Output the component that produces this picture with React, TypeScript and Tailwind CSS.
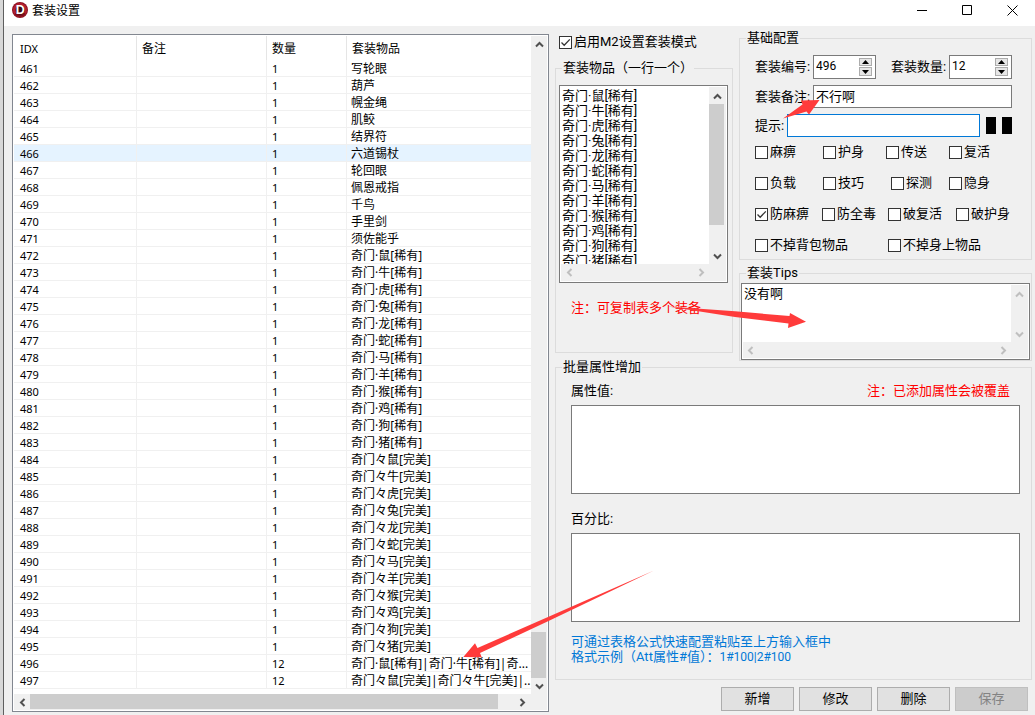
import React, { useId, useState } from 'react';

type Row = {
  idx: number;
  remark?: string;
  count: number;
  items: string;
};

type Option = {
  label: string;
  checked?: boolean;
};

type Direction = 'up' | 'down' | 'left' | 'right';

const ZODIAC = ['鼠', '牛', '虎', '兔', '龙', '蛇', '马', '羊', '猴', '鸡', '狗', '猪'];

const BASIC_ITEMS = [
  '写轮眼',
  '葫芦',
  '幌金绳',
  '肌鲛',
  '结界符',
  '六道锡杖',
  '轮回眼',
  '佩恩戒指',
  '千鸟',
  '手里剑',
  '须佐能乎',
];

const RARE_ITEMS = ZODIAC.map((name) => `奇门·${name}[稀有]`);
const PERFECT_ITEMS = ZODIAC.map((name) => `奇门々${name}[完美]`);

const rows: Row[] = [
  ...[...BASIC_ITEMS, ...RARE_ITEMS, ...PERFECT_ITEMS].map((items, i) => ({
    idx: 461 + i,
    count: 1,
    items,
  })),
  { idx: 496, count: 12, items: '奇门·鼠[稀有]|奇门·牛[稀有]|奇...' },
  { idx: 497, count: 12, items: '奇门々鼠[完美]|奇门々牛[完美]|..' },
];

const optionRows: { columns: string; options: Option[] }[] = [
  {
    columns: 'grid-cols-[68px_63px_63px_1fr]',
    options: [{ label: '麻痹' }, { label: '护身' }, { label: '传送' }, { label: '复活' }],
  },
  {
    columns: 'grid-cols-[68px_68px_58px_1fr]',
    options: [{ label: '负载' }, { label: '技巧' }, { label: '探测' }, { label: '隐身' }],
  },
  {
    columns: 'grid-cols-[67px_66px_68px_1fr]',
    options: [
      { label: '防麻痹', checked: true },
      { label: '防全毒' },
      { label: '破复活' },
      { label: '破护身' },
    ],
  },
  {
    columns: 'grid-cols-[133px_1fr]',
    options: [{ label: '不掉背包物品' }, { label: '不掉身上物品' }],
  },
];

const CHEVRONS: Record<Direction, string> = {
  up: 'M1 6.5 4.5 3 8 6.5',
  down: 'M1 2.5 4.5 6 8 2.5',
  left: 'M6.5 1 3 4.5 6.5 8',
  right: 'M2.5 1 6 4.5 2.5 8',
};

const ScrollArrow: React.FC<{ to: Direction; disabled?: boolean }> = ({ to, disabled }) => (
  <button
    type="button"
    disabled={disabled}
    aria-label={`scroll ${to}`}
    className="flex size-4 shrink-0 items-center justify-center text-[#505050] disabled:text-[#bfbfbf]"
  >
    <svg viewBox="0 0 9 9" className="size-[9px]" fill="none" stroke="currentColor" strokeWidth="2">
      <path d={CHEVRONS[to]} />
    </svg>
  </button>
);

const Check: React.FC<Option> = ({ label, checked }) => (
  <label className="flex h-4 items-center gap-0.5 whitespace-nowrap">
    <span className="grid shrink-0">
      <input
        type="checkbox"
        defaultChecked={checked}
        className="peer col-start-1 row-start-1 size-[13px] appearance-none border border-[#333] bg-white"
      />
      <svg
        viewBox="0 0 13 13"
        className="pointer-events-none invisible col-start-1 row-start-1 size-[13px] peer-checked:visible"
        fill="none"
        stroke="#333"
        strokeWidth="1.3"
      >
        <path d="M2.5 6.5 5.2 9.2 10.8 3.4" />
      </svg>
    </span>
    {label}
  </label>
);

const Group: React.FC<{ title: string; className?: string; children: React.ReactNode }> = ({
  title,
  className,
  children,
}) => (
  <fieldset className={`min-w-0 border border-[#dcdcdc] ${className ?? ''}`}>
    <legend className="ml-1.5 px-px leading-3">{title}</legend>
    {children}
  </fieldset>
);

const NumberField: React.FC<{ label: string; initial: number }> = ({ label, initial }) => {
  const id = useId();
  const [value, setValue] = useState(initial);

  return (
    <div className="flex items-center">
      <label htmlFor={id} className="w-[58px]">
        {label}:
      </label>
      <div className="flex h-6 w-[63px] border border-[#7a7a7a] bg-white p-0.5 pr-[3px]">
        <input
          id={id}
          value={value}
          onChange={(e) => setValue(Number(e.target.value) || 0)}
          className="h-4 min-w-0 flex-1 text-[12px] outline-none"
        />
        <div className="flex flex-col gap-px">
          <button
            type="button"
            aria-label={`${label} +`}
            onClick={() => setValue(value + 1)}
            className="flex h-2 w-[13px] items-center justify-center border border-[#acacac] bg-[#e6e6e6]"
          >
            <svg viewBox="0 0 7 4" className="h-1 w-[7px]">
              <path d="M3.5 0 7 4H0z" />
            </svg>
          </button>
          <button
            type="button"
            aria-label={`${label} -`}
            onClick={() => setValue(value - 1)}
            className="flex h-[9px] w-[13px] items-center justify-center border border-[#acacac] bg-[#e6e6e6]"
          >
            <svg viewBox="0 0 7 4" className="h-1 w-[7px]">
              <path d="M0 0h7L3.5 4z" />
            </svg>
          </button>
        </div>
      </div>
    </div>
  );
};

const TitleBar = () => (
  <header className="flex h-[26px] items-start bg-white pl-2">
    <svg viewBox="0 0 16 16" className="mt-0.5 size-4">
      <circle cx="8" cy="8" r="8" fill="#8d1220" />
      <circle cx="8" cy="8" r="7" fill="#b32032" />
      <path d="M2.5 12A6.8 6.8 0 0 0 13.6 11.8L8 8z" fill="#7c0f1c" />
      <circle cx="8.2" cy="8" r="4.6" fill="#3a0a10" />
      <text
        x="8.3"
        y="12.4"
        textAnchor="middle"
        fontSize="12.5"
        fontWeight="700"
        fontFamily="Liberation Sans, sans-serif"
        fill="#fff"
      >
        D
      </text>
    </svg>
    <h1 className="ml-1 flex-1 text-[12px] leading-[22px]">套装设置</h1>
    <button type="button" aria-label="最小化" className="flex h-5 w-[45px] items-center justify-center">
      <svg viewBox="0 0 11 11" className="size-[11px]" stroke="#000">
        <path d="M0 5.5h10" />
      </svg>
    </button>
    <button type="button" aria-label="最大化" className="flex h-5 w-[45px] items-center justify-center">
      <svg viewBox="0 0 11 11" className="size-[11px]" stroke="#000" fill="none">
        <path d="M.5.5h9v9h-9z" />
      </svg>
    </button>
    <button type="button" aria-label="关闭" className="flex h-5 w-[45px] items-center justify-center">
      <svg viewBox="0 0 11 11" className="size-[11px]" stroke="#000">
        <path d="M.5.5l10 10M10.5.5l-10 10" />
      </svg>
    </button>
  </header>
);

const SuitTable = () => {
  const [selected, setSelected] = useState(466);

  return (
    <section className="mt-0.5 flex min-w-0 flex-1 flex-col border border-[#828790] bg-white p-px font-['Noto_Sans','Noto_Sans_CJK_SC',sans-serif] text-[12px]">
      <div className="flex flex-1">
        <div className="min-w-0 flex-1 pb-1">
          <table className="w-full table-fixed border-separate border-spacing-0 text-left">
            <colgroup>
              <col className="w-[123px]" />
              <col className="w-[130px]" />
              <col className="w-[80px]" />
              <col />
            </colgroup>
            <thead>
              <tr>
                <th className="h-6 border-r border-[#e5e5e5] p-0 pt-0.5 pl-1.5 text-[11px] font-normal">IDX</th>
                <th className="border-r border-[#e5e5e5] p-0 pt-0.5 pl-[5px] font-normal">备注</th>
                <th className="border-r border-[#e5e5e5] p-0 pt-0.5 pl-[5px] font-normal">数量</th>
                <th className="p-0 pt-0.5 pl-[5px] font-normal">套装物品</th>
              </tr>
            </thead>
            <tbody>
              {rows.map((row) => (
                <tr
                  key={row.idx}
                  onClick={() => setSelected(row.idx)}
                  className={row.idx === selected ? 'bg-[#e5f3ff]' : ''}
                >
                  <td className="h-[17px] border-r border-b border-[#f0f0f0] p-0 pt-0.5 pl-1.5 text-[11px] leading-[14px]">
                    {row.idx}
                  </td>
                  <td className="border-r border-b border-[#f0f0f0] p-0 pt-0.5 pl-[5px] leading-[14px]">
                    {row.remark}
                  </td>
                  <td className="border-r border-b border-[#f0f0f0] p-0 pt-0.5 pl-[5px] text-[11px] leading-[14px]">
                    {row.count}
                  </td>
                  <td className="border-b border-[#f0f0f0] p-0 pt-0.5 pl-1 leading-[14px] whitespace-nowrap">
                    {row.items}
                  </td>
                </tr>
              ))}
            </tbody>
          </table>
        </div>
        <div className="flex w-4 flex-col bg-[#f0f0f0]">
          <ScrollArrow to="up" />
          <div className="flex-1" />
          <div className="mr-px h-[46px] bg-[#cdcdcd]" />
          <ScrollArrow to="down" />
        </div>
      </div>
      <div className="flex h-4 bg-[#f0f0f0] pr-[17px]">
        <ScrollArrow to="left" />
        <div className="mb-px flex-1 bg-[#cdcdcd]" />
        <div className="w-4" />
        <ScrollArrow to="right" />
      </div>
    </section>
  );
};

const SuitItems = () => (
  <div className="flex w-[178px] flex-col gap-3 pt-0.5 pb-2">
    <div className="pl-1">
      <Check label="启用M2设置套装模式" checked />
    </div>
    <Group title="套装物品（一行一个）" className="flex-1">
      <div className="mt-[11px] mr-1 ml-[3px] flex h-[198px] flex-col border border-[#7a7a7a] bg-[#f0f0f0] outline outline-1 -outline-offset-2 outline-white">
        <div className="flex flex-1">
          <textarea
            aria-label="套装物品"
            wrap="off"
            defaultValue={RARE_ITEMS.join('\n')}
            className="min-w-0 flex-1 resize-none overflow-hidden bg-white pt-0.5 pl-0.5 leading-[15px] outline-none"
          />
          <div className="flex w-[18px] flex-col pt-0.5 pr-0.5">
            <ScrollArrow to="up" />
            <div className="mr-px h-[121px] bg-[#cdcdcd]" />
            <div className="flex-1" />
            <ScrollArrow to="down" />
          </div>
        </div>
        <div className="flex h-[18px] justify-between pr-[18px] pl-px">
          <ScrollArrow to="left" disabled />
          <ScrollArrow to="right" disabled />
        </div>
      </div>
      <p className="mt-[17px] ml-[15px] leading-4 text-[#f00]">注：可复制表多个装备</p>
    </Group>
  </div>
);

const BasicConfig = () => (
  <Group title="基础配置">
    <div className="flex flex-col gap-1.5 pt-[11px] pr-[19px] pl-[15px]">
      <div className="flex justify-between">
        <NumberField label="套装编号" initial={496} />
        <NumberField label="套装数量" initial={12} />
      </div>
      <div className="flex items-center">
        <label htmlFor="remark" className="w-[58px]">
          套装备注:
        </label>
        <input
          id="remark"
          defaultValue="不行啊"
          className="h-[23px] min-w-0 flex-1 border border-[#7a7a7a] bg-white pb-0.5 pl-0.5 outline-none"
        />
      </div>
      <div className="flex items-center gap-1.5">
        <div className="flex flex-1 items-center">
          <label htmlFor="hint" className="w-8">
            提示:
          </label>
          <input
            id="hint"
            className="h-[23px] min-w-0 flex-1 border border-[#0078d7] bg-white px-0.5 outline-none"
          />
        </div>
        <button type="button" aria-label="文字颜色" className="h-[17px] w-2.5 bg-black" />
        <button type="button" aria-label="背景颜色" className="h-[17px] w-2.5 bg-black" />
      </div>
    </div>
    <div className="mt-[7px] flex flex-col gap-[15px] pb-1.5 pl-[15px]">
      {optionRows.map(({ columns, options }) => (
        <div key={options[0].label} className={`grid ${columns}`}>
          {options.map((option) => (
            <Check key={option.label} {...option} />
          ))}
        </div>
      ))}
    </div>
  </Group>
);

const SuitTips = () => (
  <Group title="套装Tips">
    <div className="mx-px mt-1 flex h-[77px] flex-col border border-[#7a7a7a] bg-[#f0f0f0] outline outline-1 -outline-offset-2 outline-white">
      <div className="flex flex-1">
        <textarea
          aria-label="套装Tips"
          defaultValue="没有啊"
          className="min-w-0 flex-1 resize-none overflow-hidden bg-white pt-0.5 pl-0.5 leading-[15px] outline-none"
        />
        <div className="flex w-[18px] flex-col justify-between pt-0.5 pr-0.5">
          <ScrollArrow to="up" disabled />
          <ScrollArrow to="down" disabled />
        </div>
      </div>
      <div className="flex h-[17px] justify-between pr-[18px]">
        <ScrollArrow to="left" disabled />
        <ScrollArrow to="right" disabled />
      </div>
    </div>
  </Group>
);

const BatchAttributes = () => (
  <Group title="批量属性增加">
    <div className="flex flex-col pt-2.5 pr-[11px] pb-3.5 pl-[15px]">
      <div className="flex justify-between pr-2.5 leading-4">
        <label htmlFor="values">属性值:</label>
        <p className="text-[#f00]">注：已添加属性会被覆盖</p>
      </div>
      <textarea
        id="values"
        className="mt-1.5 h-[89px] resize-none border border-[#7a7a7a] bg-white p-0.5 outline-none"
      />
      <label htmlFor="percent" className="mt-[17px] leading-4">
        百分比:
      </label>
      <textarea
        id="percent"
        className="mt-1.5 h-[89px] resize-none border border-[#7a7a7a] bg-white p-0.5 outline-none"
      />
      <p className="mt-3 leading-[15px] text-[#0078d7]">
        可通过表格公式快速配置粘贴至上方输入框中
        <br />
        格式示例（Att属性#值）：<span className="text-[12px]">1#100|2#100</span>
      </p>
    </div>
  </Group>
);

const Actions = () => (
  <div className="mt-[7px] flex justify-end gap-[5px] pr-1">
    {['新增', '修改', '删除', '保存'].map((name) => (
      <button
        key={name}
        type="button"
        disabled={name === '保存'}
        className="flex h-6 w-[73px] items-center justify-center border border-[#adadad] bg-[#e1e1e1] disabled:border-[#bfbfbf] disabled:bg-[#ccc] disabled:text-[#838383]"
      >
        {name}
      </button>
    ))}
  </div>
);

// Red marker arrows that point from the form to the matching data
const Arrows = () => (
  <svg
    viewBox="555 32 477 680"
    className="pointer-events-none absolute top-0 left-0 h-[680px] w-[477px] overflow-visible"
    fill="#ff3b3b"
  >
    <path d="M783 118.5 802.5 104.5 801 100.5 819.5 100 809 114.5 806.5 111.5z" />
    <path d="M668 306.5 735 311.3 789.5 316 790 313 806 321.8 788 328 788.5 323.5 735 317z" />
    <path d="M654 570.5 548 617 477.5 648 475 643.3 463.3 657 481.7 657.3 480 653 548 621.3z" />
  </svg>
);

const App: React.FC = () => {
  return (
    <div className="flex min-h-screen bg-[#d8d8d8] font-[Roboto,'Noto_Sans_CJK_SC',sans-serif] text-[13px] leading-4 text-black">
      <div className="ml-[3px] flex min-w-0 flex-1 flex-col border-l border-[#5f5f5f] bg-[#f0f0f0]">
        <TitleBar />
        <main className="flex flex-1 gap-1.5 pt-1.5 pr-[3px] pb-[3px] pl-2">
          <SuitTable />
          <div className="relative flex w-[477px] shrink-0 flex-col">
            <div className="flex gap-1.5">
              <SuitItems />
              <div className="flex min-w-0 flex-1 flex-col gap-[7px]">
                <BasicConfig />
                <SuitTips />
              </div>
            </div>
            <BatchAttributes />
            <Actions />
            <Arrows />
          </div>
        </main>
      </div>
    </div>
  );
};

export default App;
